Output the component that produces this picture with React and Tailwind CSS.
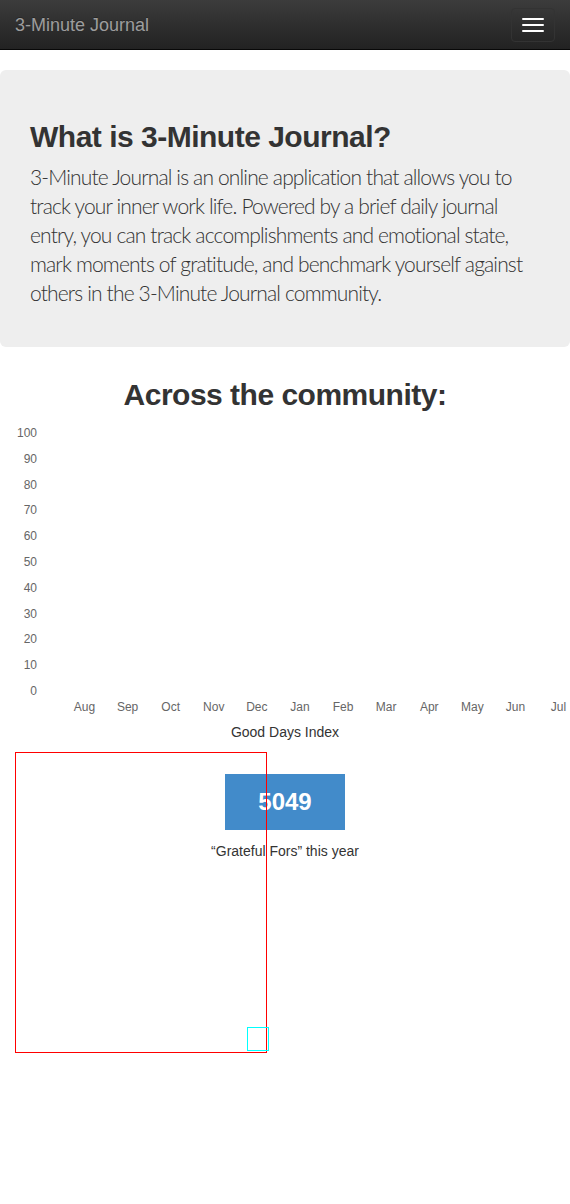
import React from "react";

const months = ["Aug", "Sep", "Oct", "Nov", "Dec", "Jan", "Feb", "Mar", "Apr", "May", "Jun", "Jul"];
const yTicks = [100, 90, 80, 70, 60, 50, 40, 30, 20, 10, 0];

function Chart() {
  return (
    <svg width="570" height="311" className="block" style={{ fontFamily: "'Liberation Sans', Arial, sans-serif" }}>
      {yTicks.map((v, i) => (
        <text key={v} x="37" y={26 + i * 25.8} textAnchor="end" fontSize="12" fill="#666">
          {v}
        </text>
      ))}
      {months.map((m, i) => (
        <text key={m} x={84.5 + i * 43.09} y="299.7" textAnchor="middle" fontSize="12" fill="#666">
          {m}
        </text>
      ))}
    </svg>
  );
}

export default function App() {
  return (
    <div className="relative w-[570px] min-h-[1204px] bg-white text-[#333] font-['Liberation_Sans',Arial,sans-serif]">
      <nav className="h-[50px] border-b border-[#080808] bg-gradient-to-b from-[#3c3c3c] to-[#222222] flex items-center justify-between pl-[15px] pr-[15px]">
        <span className="text-[18px] leading-[20px] text-[#9d9d9d] [text-shadow:0_-1px_0_rgba(0,0,0,0.25)]">
          3-Minute Journal
        </span>
        <button className="w-[44px] h-[34px] border border-[#333] rounded-[4px] flex flex-col items-center justify-center gap-[4px]">
          <span className="block w-[22px] h-[2px] bg-white rounded-[1px]" />
          <span className="block w-[22px] h-[2px] bg-white rounded-[1px]" />
          <span className="block w-[22px] h-[2px] bg-white rounded-[1px]" />
        </button>
      </nav>

      <section className="mt-[20px] bg-[#eeeeee] rounded-[6px] pt-[50px] pb-[40px] px-[30px]">
        <h2 className="text-[30px] leading-[33px] font-bold tracking-[-0.5px] text-[#333]">What is 3-Minute Journal?</h2>
        <p className="mt-[9px] text-[21px] leading-[29px] font-light tracking-[-0.85px] text-[#333] whitespace-nowrap font-['Lato',sans-serif]">
          3-Minute Journal is an online application that allows you to
          <br />
          track your inner work life. Powered by a brief daily journal
          <br />
          entry, you can track accomplishments and emotional state,
          <br />
          mark moments of gratitude, and benchmark yourself against
          <br />
          others in the 3-Minute Journal community.
        </p>
      </section>

      <h2 className="mt-[31px] text-center text-[30px] leading-[33px] font-bold tracking-[-0.5px] text-[#333]">
        Across the community:
      </h2>

      <Chart />

      <div className="text-center text-[14px] leading-[20px] text-[#333]">Good Days Index</div>

      <div className="mt-[32px] mx-auto w-[120px] h-[56px] bg-[#428bca] flex items-center justify-center text-white text-[24px] font-bold">
        5049
      </div>
      <div className="mt-[11px] text-center text-[14px] leading-[20px] text-[#333]">“Grateful Fors” this year</div>

      <div className="absolute left-[15px] top-[752px] w-[252px] h-[301px] border border-[#ff0000]" />
      <div className="absolute left-[247px] top-[1027px] w-[22px] h-[24px] border border-[#00ffff]" />
    </div>
  );
}
